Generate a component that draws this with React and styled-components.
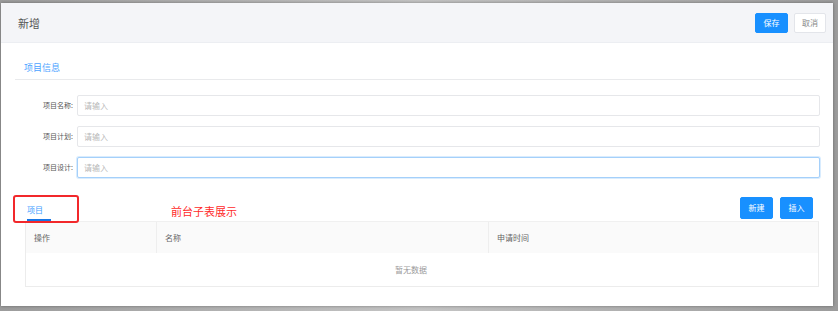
import React from 'react';
import styled, { createGlobalStyle } from 'styled-components';

const GlobalStyle = createGlobalStyle`
  body {
    margin: 0;
    font-family: "Noto Sans CJK SC", "Noto Sans", sans-serif;
  }
  * { box-sizing: border-box; }
`;

// grey backdrop that shows round the captured window
const Stage = styled.div`
  width: 838px;
  height: 311px;
  padding: 3px 5px 5px 1px;
  background: linear-gradient(90deg, #9c9c9c, #c4c4c4 50%, #9c9c9c);
  display: flex;
`;

const Window = styled.div`
  flex: 1;
  background: #fff;
  display: flex;
  flex-direction: column;
  box-shadow: 0 0 3px rgba(0, 0, 0, 0.35);
`;

const Header = styled.div`
  height: 40px;
  background: #f4f5f8;
  border-bottom: 1px solid #eceef2;
  display: flex;
  align-items: center;
  padding: 0 7px 0 17px;
`;

const Title = styled.h1`
  flex: 1;
  margin: 0;
  font-size: 11px;
  font-weight: 400;
  color: #555;
  line-height: 14px;
`;

const Button = styled.button`
  height: ${p => p.$h || 20}px;
  width: ${p => p.$w || 33}px;
  margin-left: ${p => p.$gap || 0}px;
  padding: 0;
  border-radius: 2px;
  font-family: inherit;
  font-size: 8px;
  line-height: 1;
  border: 1px solid ${p => (p.$ghost ? '#e3e5ea' : '#1890ff')};
  background: ${p => (p.$ghost ? '#fff' : '#1890ff')};
  color: ${p => (p.$ghost ? '#888' : '#fff')};
`;

const Body = styled.div`
  flex: 1;
  padding: 19px 13px 0 14px;
  display: flex;
  flex-direction: column;
`;

const SectionTitle = styled.div`
  font-size: 9px;
  line-height: 12px;
  color: #4ba3ff;
  padding: 0 0 5px 9px;
  border-bottom: 1px solid #e9eaec;
`;

const Form = styled.div`
  display: flex;
  flex-direction: column;
  gap: 10.5px;
  padding-top: 15px;
`;

const Row = styled.div`
  display: flex;
  align-items: center;
`;

const Label = styled.label`
  width: 62px;
  padding-right: 4px;
  text-align: right;
  font-size: 7px;
  color: #555;
  white-space: nowrap;
`;

const Input = styled.input`
  flex: 1;
  height: 20.5px;
  border: 1px solid ${p => (p.$focus ? '#a5d0fa' : '#e6e7ea')};
  box-shadow: ${p => (p.$focus ? '0 0 0 1px rgba(170, 212, 252, 0.45)' : 'none')};
  border-radius: 2px;
  padding: 0 6px;
  font-family: inherit;
  font-size: 8px;
  background: #fff;
  outline: none;
  &::placeholder { color: #b8b8b8; }
`;

const SubTable = styled.div`
  margin-top: 18px;
  padding: 0 1px 0 10px;
  display: flex;
  flex-direction: column;
`;

const TabBar = styled.div`
  position: relative;
  height: 25px;
  display: flex;
  align-items: flex-end;
`;

const Tab = styled.div`
  margin-left: 2px;
  width: 24px;
  height: 16px;
  font-size: 8px;
  line-height: 10px;
  color: #3d9cff;
  border-bottom: 2px solid #1677e6;
`;

// annotation drawn over the screenshot
const Highlight = styled.div`
  position: absolute;
  left: -12px;
  top: -1px;
  width: 66px;
  height: 28px;
  border: 2px solid #f2282b;
  border-radius: 3px;
`;

const Note = styled.div`
  margin-left: 120px;
  align-self: center;
  margin-top: 6px;
  font-size: 11px;
  line-height: 14px;
  color: #ff2a2a;
  flex: 1;
`;

const Actions = styled.div`
  display: flex;
  align-self: flex-start;
  margin-top: 1px;
  padding-right: 6px;
`;

const Table = styled.div`
  border: 1px solid #ececec;
  border-top-color: #f0f0f0;
`;

const HeadRow = styled.div`
  display: grid;
  grid-template-columns: 130px 332px 1fr;
  height: 31px;
  background: #fafafa;
`;

const HeadCell = styled.div`
  display: flex;
  align-items: center;
  padding-left: 8px;
  font-size: 8px;
  color: #666;
  & + & { border-left: 1px solid #eeeeee; }
`;

const Empty = styled.div`
  height: 33px;
  display: flex;
  align-items: center;
  justify-content: center;
  font-size: 8px;
  color: #9a9a9a;
  padding-right: 22px;
`;

const fields = [
  { label: '项目名称:' },
  { label: '项目计划:' },
  { label: '项目设计:', focus: true },
];

export default function App() {
  return (
    <>
      <GlobalStyle />
      <Stage>
        <Window>
          <Header>
            <Title>新增</Title>
            <Button>保存</Button>
            <Button $ghost $w={32} $gap={6}>取消</Button>
          </Header>
          <Body>
            <SectionTitle>项目信息</SectionTitle>
            <Form>
              {fields.map(f => (
                <Row key={f.label}>
                  <Label>{f.label}</Label>
                  <Input placeholder="请输入" $focus={f.focus} />
                </Row>
              ))}
            </Form>
            <SubTable>
              <TabBar>
                <Highlight />
                <Tab>项目</Tab>
                <Note>前台子表展示</Note>
                <Actions>
                  <Button $h={22}>新建</Button>
                  <Button $h={22} $gap={7}>插入</Button>
                </Actions>
              </TabBar>
              <Table>
                <HeadRow>
                  <HeadCell>操作</HeadCell>
                  <HeadCell>名称</HeadCell>
                  <HeadCell>申请时间</HeadCell>
                </HeadRow>
                <Empty>暂无数据</Empty>
              </Table>
            </SubTable>
          </Body>
        </Window>
      </Stage>
    </>
  );
}
